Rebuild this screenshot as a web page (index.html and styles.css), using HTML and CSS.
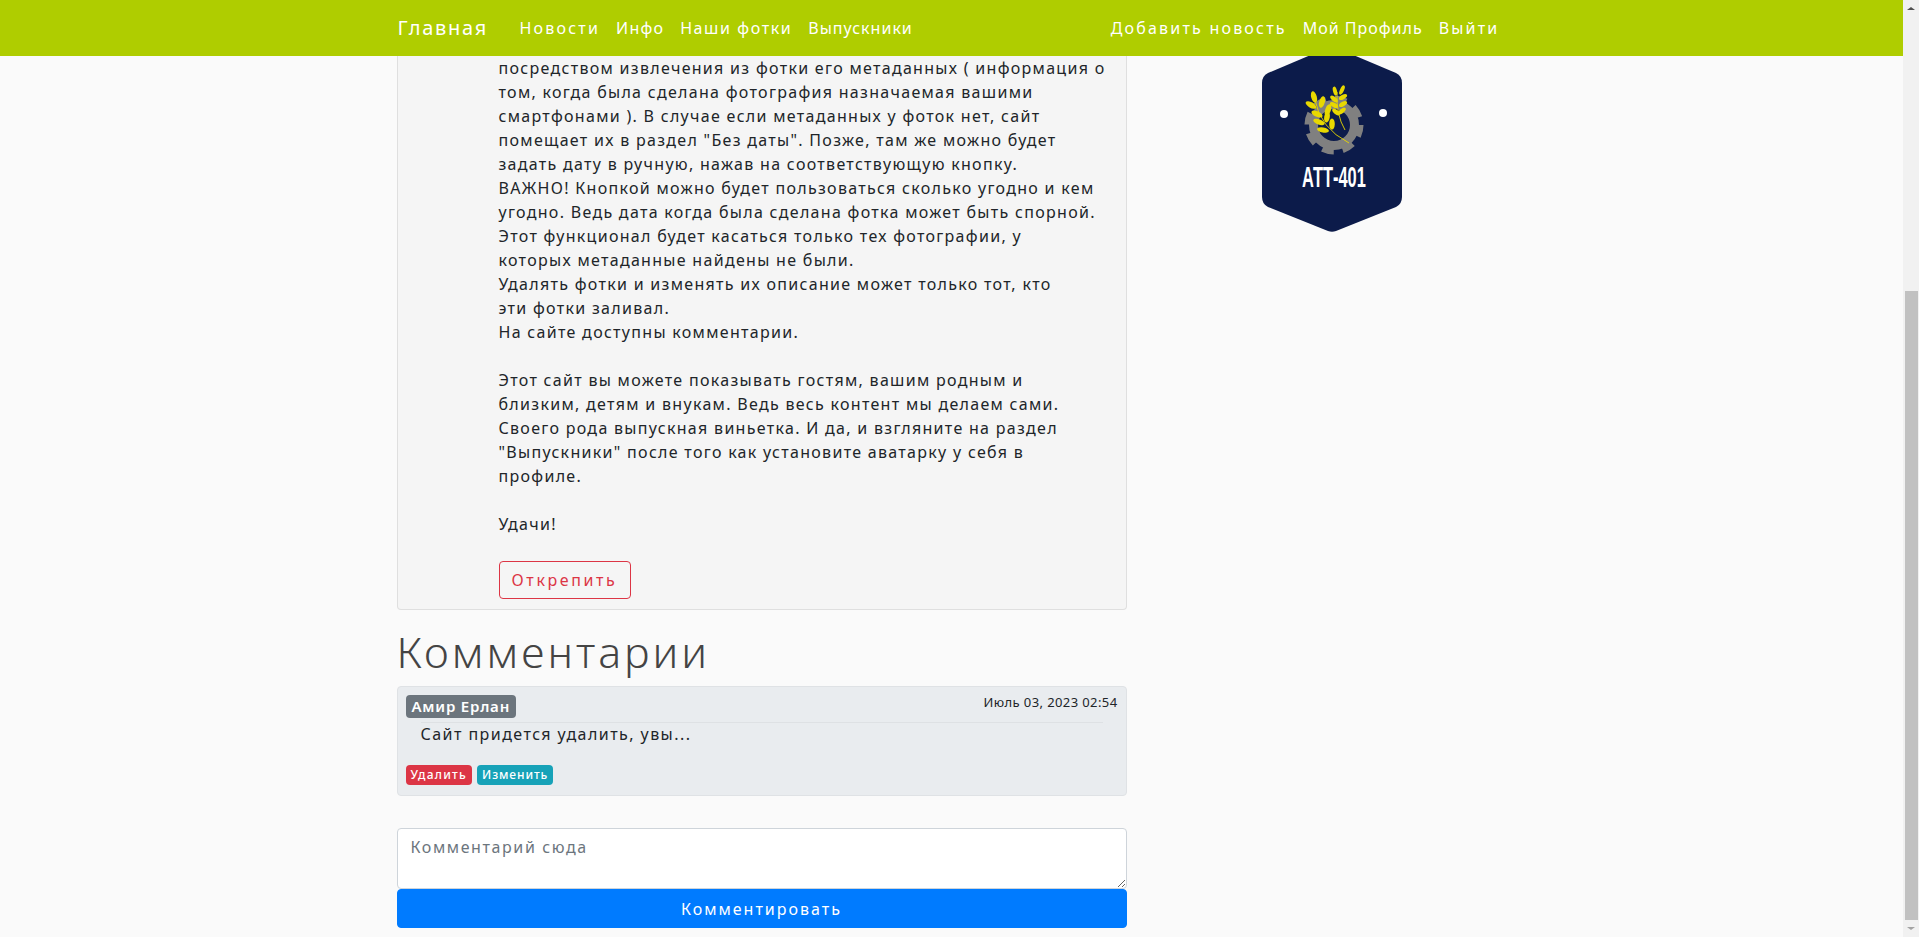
FILE: index.html
```html
<!DOCTYPE html>
<html lang="ru">
<head>
<meta charset="utf-8">
<title>Главная</title>
<link rel="stylesheet" href="styles.css">
</head>
<body>
<div class="page">
  <div class="main">
    <nav class="navbar">
      <div class="nav-inner">
        <a class="brand">Главная</a>
        <ul class="nav-list">
          <li><a class="sp-wide">Новости</a></li>
          <li><a>Инфо</a></li>
          <li><a class="sp-mid">Наши фотки</a></li>
          <li><a class="sp-tight">Выпускники</a></li>
        </ul>
        <ul class="nav-list nav-right">
          <li><a class="sp-wide">Добавить новость</a></li>
          <li><a class="sp-tight">Мой Профиль</a></li>
          <li><a class="sp-wide">Выйти</a></li>
        </ul>
      </div>
    </nav>
    <div class="content">
      <section class="col-main">
        <article class="post">
          <p class="post-text">посредством извлечения из фотки его метаданных ( информация о<br>
том, когда была сделана фотография назначаемая вашими<br>
смартфонами ). В случае если метаданных у фоток нет, сайт<br>
помещает их в раздел "Без даты". Позже, там же можно будет<br>
задать дату в ручную, нажав на соответствующую кнопку.<br>
ВАЖНО! Кнопкой можно будет пользоваться сколько угодно и кем<br>
угодно. Ведь дата когда была сделана фотка может быть спорной.<br>
Этот функционал будет касаться только тех фотографии, у<br>
которых метаданные найдены не были.<br>
Удалять фотки и изменять их описание может только тот, кто<br>
эти фотки заливал.<br>
На сайте доступны комментарии.<br>
<br>
Этот сайт вы можете показывать гостям, вашим родным и<br>
близким, детям и внукам. Ведь весь контент мы делаем сами.<br>
Своего рода выпускная виньетка. И да, и взгляните на раздел<br>
"Выпускники" после того как установите аватарку у себя в<br>
профиле.<br>
<br>
Удачи!</p>
          <button class="btn-unpin">Открепить</button>
        </article>
        <h1 class="comments-title">Комментарии</h1>
        <div class="comment">
          <div class="comment-head">
            <span class="author">Амир Ерлан</span>
            <span class="date">Июль 03, 2023 02:54</span>
          </div>
          <hr class="comment-rule">
          <p class="comment-text">Сайт придется удалить, увы...</p>
          <div class="comment-actions">
            <a class="tag tag-red">Удалить</a>
            <a class="tag tag-teal">Изменить</a>
          </div>
        </div>
        <form class="comment-form">
          <textarea class="comment-input" placeholder="Комментарий сюда"></textarea>
          <button type="button" class="btn-submit">Комментировать</button>
        </form>
      </section>
      <aside class="col-side">
        <svg class="logo" viewBox="1261 56 142 178" role="img" aria-label="АТТ-401">
          <path fill="#0c1b4a" d="M1332 46 L1396 73 Q1402 76 1402 83 L1402 197 Q1402 204 1396 207 L1336 231 Q1332 232.500 1328 231 L1268 207 Q1262 204 1262 197 L1262 83 Q1262 76 1268 73 Z"/>
          <circle cx="1284" cy="114" r="4" fill="#fff"/>
          <circle cx="1383" cy="113" r="4" fill="#fff"/>
          <circle cx="1334" cy="125" r="20.500" fill="none" stroke="#808080" stroke-width="9"/>
          <circle cx="1334" cy="125" r="26" fill="none" stroke="#808080" stroke-width="7" stroke-dasharray="11.500 8.920"/>
          <g fill="none" stroke="#e8d800" stroke-width="0.900">
            <path d="M1315 100 Q1320 128 1349 143"/>
            <path d="M1337 92 Q1336 115 1345 130"/>
          </g>
          <g fill="#e8d800">
            <ellipse cx="1314" cy="97" rx="2.800" ry="6" transform="rotate(-15 1314 97)"/>
            <ellipse cx="1311" cy="105" rx="2.800" ry="6" transform="rotate(-60 1311 105)"/>
            <ellipse cx="1322" cy="102" rx="2.800" ry="6" transform="rotate(15 1322 102)"/>
            <ellipse cx="1317" cy="114" rx="2.800" ry="6" transform="rotate(-65 1317 114)"/>
            <ellipse cx="1328" cy="110" rx="2.800" ry="6" transform="rotate(20 1328 110)"/>
            <ellipse cx="1319" cy="122" rx="2.600" ry="6" transform="rotate(-70 1319 122)"/>
            <ellipse cx="1327" cy="117" rx="2.800" ry="5.500" transform="rotate(10 1327 117)"/>
            <ellipse cx="1323" cy="130" rx="2.600" ry="6" transform="rotate(-80 1323 130)"/>
            <ellipse cx="1332" cy="124" rx="2.800" ry="5.500"/>
            <ellipse cx="1335" cy="91" rx="2" ry="4.500" transform="rotate(-15 1335 91)"/>
            <ellipse cx="1342" cy="90" rx="2" ry="5" transform="rotate(25 1342 90)"/>
            <ellipse cx="1334" cy="99" rx="2.200" ry="4.500" transform="rotate(-50 1334 99)"/>
            <ellipse cx="1343" cy="97" rx="2.200" ry="4.500" transform="rotate(60 1343 97)"/>
            <ellipse cx="1334" cy="105" rx="2.200" ry="4.500" transform="rotate(-60 1334 105)"/>
            <ellipse cx="1343" cy="104" rx="2.200" ry="4.500" transform="rotate(60 1343 104)"/>
            <ellipse cx="1336" cy="112" rx="2.200" ry="4.500" transform="rotate(-50 1336 112)"/>
            <ellipse cx="1342" cy="111" rx="2.200" ry="4.500" transform="rotate(50 1342 111)"/>
          </g>
          <text class="logo-text" transform="translate(1302 187) scale(1 1.850)">АТТ-401</text>
        </svg>
      </aside>
    </div>
  </div>
  <div class="scrollbar">
    <span class="arrow arrow-up"></span>
    <div class="track"><div class="thumb"></div></div>
    <span class="arrow arrow-down"></span>
  </div>
</div>
</body>
</html>
```
FILE: styles.css
```css
* { box-sizing: border-box; }
html, body { margin: 0; height: 100%; overflow: hidden; }
body {
  font-family: "Noto Sans", "DejaVu Sans", sans-serif;
  font-size: 16px;
  line-height: 24px;
  color: #212529;
  background: #fafafa;
  letter-spacing: 1.3px;
}
.page { display: flex; height: 937px; }
.main { flex: 1; min-width: 0; }

.navbar { height: 56px; background: #afcd00; color: #fff; }
.nav-inner { width: 1140px; height: 56px; margin: 0 auto; padding: 0 14px 0 16px; display: flex; align-items: center; }
.brand { font-size: 20px; width: 114px; letter-spacing: 1.7px; }
.nav-list { list-style: none; margin: 0; padding: 0; display: flex; letter-spacing: 1.2px; }
.nav-list a { display: block; padding: 0 8px; }
.nav-list .sp-wide { letter-spacing: 2.2px; }
.nav-list .sp-mid { letter-spacing: 1.6px; }
.nav-list .sp-tight { letter-spacing: 1px; }
.nav-right { margin-left: auto; }

.content { width: 1140px; margin: 0 auto; display: grid; grid-template-columns: 760px 380px; }
.col-main { padding: 0 15px; }
.col-side { padding-left: 119px; }
.logo { display: block; width: 142px; height: 178px; }
.logo-text { font-family: "Liberation Sans Narrow", "Liberation Sans", sans-serif; font-size: 16.4px; font-weight: 700; fill: #fff; letter-spacing: 0; }

.post { background: #f5f5f5; border: 1px solid #dfdfdf; border-top: 0; border-radius: 0 0 4px 4px; padding: 0 10px 10px 101px; }
.post-text { margin: 0 0 25px; white-space: nowrap; }
.btn-unpin { display: block; width: 132px; height: 38px; padding: 0; background: transparent; border: 1px solid #dc3545; border-radius: 4px; color: #dc3545; font: inherit; letter-spacing: 2.6px; }

.comments-title { margin: 18px 0 10px; font-size: 43px; line-height: 48px; font-weight: 300; color: #444; letter-spacing: 3px; }

.comment { height: 110px; background: #e9ecef; border: 1px solid #dfe2e5; border-radius: 4px; padding: 8px; }
.comment-head { display: flex; justify-content: space-between; align-items: flex-start; }
.author { height: 23px; padding: 0 6px; background: #6c757d; color: #fff; border-radius: 4px; font-size: 15px; line-height: 23px; font-weight: 600; letter-spacing: .8px; }
.date { font-size: 13px; line-height: 15px; letter-spacing: .4px; }
.comment-rule { margin: 4px 15px 0; border: 0; border-top: 1px solid #dee1e4; }
.comment-text { margin: 0 15px 20px; line-height: 23px; font-size: 16px; letter-spacing: 1.45px; }
.comment-actions { display: flex; gap: 5px; margin-top: -1px; }
.tag { display: block; height: 20px; padding: 0 5px; border-radius: 4px; color: #fff; font-size: 12px; line-height: 20px; letter-spacing: .9px; font-weight: 500; }
.tag-red { background: #dc3545; letter-spacing: 1.25px; }
.tag-teal { background: #17a2b8; }

.comment-form { margin-top: 32px; }
.comment-input { display: block; width: 100%; height: 61px; padding: 6px 13px; background: #fff; border: 1px solid #ced4da; border-radius: 4px; font: inherit; letter-spacing: 1.6px; color: #495057; }
.comment-input::placeholder { color: #6c757d; opacity: 1; }
.btn-submit { display: block; width: 100%; height: 39px; padding: 0; background: #007bff; color: #fff; border: 1px solid #007bff; border-radius: 4px; font: inherit; letter-spacing: 2px; }

.scrollbar { width: 16px; display: flex; flex-direction: column; align-items: center; background: #f1f1f1; }
.arrow { display: block; flex: none; width: 0; height: 0; border-left: 4px solid transparent; border-right: 4px solid transparent; }
.arrow-up { margin-top: 7px; border-bottom: 3px solid #505050; }
.arrow-down { margin-bottom: 7px; border-top: 3px solid #a3a3a3; }
.track { flex: 1; width: 100%; padding: 281px 1px 0 2px; display: flex; }
.thumb { width: 100%; height: 629px; background: #c1c1c1; }
```
